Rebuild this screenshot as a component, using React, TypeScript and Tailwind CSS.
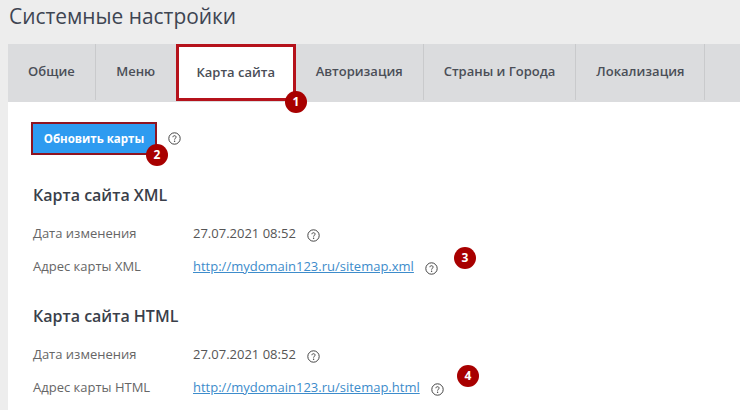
const font = { fontFamily: '"Open Sans", sans-serif' };

function Help({ className = "" }: { className?: string }) {
  return (
    <svg width="13" height="13" viewBox="0 0 13 13" fill="none" className={className}>
      <circle cx="6.5" cy="6.5" r="5.7" stroke="#444" strokeWidth="1" />
      <path d="M4.9 5.2c0-.9.7-1.5 1.6-1.5s1.6.6 1.6 1.4c0 1.2-1.5 1.2-1.5 2.5" stroke="#444" strokeWidth="1" fill="none" />
      <circle cx="6.6" cy="9.3" r="0.7" fill="#444" />
    </svg>
  );
}

function Badge({ n, className }: { n: number; className: string }) {
  return (
    <div className={`absolute w-[22px] h-[22px] rounded-full bg-[#a80000] text-white text-[12px] font-bold flex items-center justify-center ${className}`}>
      {n}
    </div>
  );
}

function Tab({ label, active }: { label: string; active?: boolean }) {
  if (active) {
    return (
      <div className="h-[57px] w-[120px] bg-white border-[3px] border-[#b5121b] flex items-center justify-center text-[13px] font-semibold text-[#4a4e57]">
        {label}
      </div>
    );
  }
  return (
    <div className="h-[56px] mb-[2px] px-5 flex items-center border-r border-[#c9cacc] text-[13px] font-semibold text-[#4a4e57]">
      {label}
    </div>
  );
}

function Row({ label, children }: { label: string; children: React.ReactNode }) {
  return (
    <div className="flex items-center h-[33px] text-[13px] text-[#666]">
      <div className="w-[160px]">{label}</div>
      {children}
    </div>
  );
}

function Section({ title, addrLabel, href, date }: { title: string; addrLabel: string; href: string; date: string }) {
  return (
    <div className="flex flex-col">
      <h2 className="text-[16px] leading-[22px] font-semibold text-[#3a3f4a]">{title}</h2>
      <div className="mt-[11px] flex flex-col">
        <Row label="Дата изменения">
          <span className="text-[#555]">{date}</span>
          <Help className="ml-[11px] mt-[3px]" />
        </Row>
        <Row label={addrLabel}>
          <a className="text-[#3d8ccb] underline">{href}</a>
          <Help className="ml-[11px] mt-[3px]" />
        </Row>
      </div>
    </div>
  );
}

export default function App() {
  return (
    <div style={font} className="relative w-[740px] h-[410px] overflow-hidden bg-[#ededed] pl-2">
      <h1 className="h-[44px] pl-px pt-[1px] text-[20.9px] leading-[30px] text-[#3e4552]">Системные настройки</h1>
      <div className="flex h-[58px] bg-[#dbdcde]">
        <Tab label="Общие" />
        <div className="h-[56px] w-[80px] flex items-center justify-center text-[13px] font-semibold text-[#4a4e57]">Меню</div>
        <Tab label="Карта сайта" active />
        <Tab label="Авторизация" />
        <Tab label="Страны и Города" />
        <Tab label="Локализация" />
      </div>
      <div className="bg-white h-[308px] pl-[23px]">
        <div className="pt-5 flex items-center">
          <button className="w-[126px] h-[33px] bg-[#2e9bf0] border-2 border-[#8f1420] text-white text-[11.5px] font-bold">Обновить карты</button>
          <Help className="ml-[11px] -mt-[1px]" />
        </div>
        <div className="pl-[2px] pt-[29px] flex flex-col gap-[22px]">
          <Section title="Карта сайта XML" addrLabel="Адрес карты XML" href="http://mydomain123.ru/sitemap.xml" date="27.07.2021 08:52" />
          <Section title="Карта сайта HTML" addrLabel="Адрес карты HTML" href="http://mydomain123.ru/sitemap.html" date="27.07.2021 08:52" />
        </div>
      </div>
      <Badge n={1} className="left-[285px] top-[91px]" />
      <Badge n={2} className="left-[146px] top-[144px]" />
      <Badge n={3} className="left-[454px] top-[247px]" />
      <Badge n={4} className="left-[457px] top-[365px]" />
    </div>
  );
}
